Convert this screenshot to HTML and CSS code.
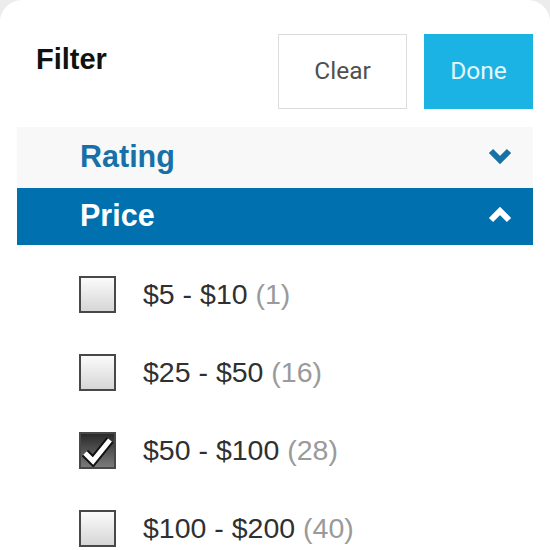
FILE: index.html
```html
<!DOCTYPE html>
<html>
<head>
<meta charset="utf-8">
<link rel="stylesheet" href="styles.css">
</head>
<body>
<div class="panel">
  <header class="header">
    <h1 class="title">Filter</h1>
    <div class="actions">
      <button class="btn btn-clear">Clear</button>
      <button class="btn btn-done">Done</button>
    </div>
  </header>
  <div class="accordion">
    <div class="acc-row acc-closed">
      <span class="acc-label">Rating</span>
      <svg class="chev" width="24" height="16" viewBox="0 0 24 16"><polyline points="3,3 12,12 21,3" fill="none" stroke="currentColor" stroke-width="6" stroke-linejoin="miter" stroke-linecap="butt"/></svg>
    </div>
    <div class="acc-row acc-open">
      <span class="acc-label">Price</span>
      <svg class="chev" width="24" height="16" viewBox="0 0 24 16"><polyline points="3,13 12,4 21,13" fill="none" stroke="currentColor" stroke-width="6" stroke-linejoin="miter" stroke-linecap="butt"/></svg>
    </div>
    <ul class="options">
      <li class="option"><span class="box"></span><span class="opt-text">$5 - $10 <span class="count">(1)</span></span></li>
      <li class="option"><span class="box"></span><span class="opt-text">$25 - $50 <span class="count">(16)</span></span></li>
      <li class="option"><span class="box box-checked"><svg width="33" height="33" viewBox="0 0 33 33"><polyline points="4,19 12,27 29,6" fill="none" stroke="#111" stroke-width="9" stroke-linejoin="miter"/><polyline points="4,19 12,27 29,6" fill="none" stroke="#fff" stroke-width="5" stroke-linejoin="miter"/></svg></span><span class="opt-text">$50 - $100 <span class="count">(28)</span></span></li>
      <li class="option"><span class="box"></span><span class="opt-text">$100 - $200 <span class="count">(40)</span></span></li>
    </ul>
  </div>
</div>
</body>
</html>
```
FILE: styles.css
```css
html, body {
  margin: 0;
  padding: 0;
  background: #ececec;
}
.panel {
  width: 550px;
  height: 550px;
  background: #fff;
  border-radius: 22px 22px 0 0;
  overflow: hidden;
  font-family: "Liberation Sans", Arial, sans-serif;
}
.header {
  display: flex;
  justify-content: space-between;
  align-items: flex-start;
  height: 127px;
  box-sizing: border-box;
  padding: 34px 17px 0 36px;
}
.title {
  margin: 11px 0 0 0;
  font-size: 29px;
  line-height: 29px;
  font-weight: bold;
  color: #111;
}
.actions {
  display: flex;
  gap: 17px;
}
.btn {
  height: 75px;
  font-family: Roboto, "Liberation Sans", sans-serif;
  font-size: 24.5px;
  padding: 0 0 2px 0;
  margin: 0;
  cursor: pointer;
}
.btn-clear {
  width: 129px;
  background: #fff;
  border: 1.5px solid #dcdcdc;
  color: #505050;
}
.btn-done {
  width: 109px;
  background: #1bb3e4;
  border: none;
  color: #e6f7fc;
}
.accordion {
  margin: 0 17px;
}
.acc-row {
  display: flex;
  align-items: center;
  justify-content: space-between;
  padding: 0 21px 0 63px;
  box-sizing: border-box;
}
.acc-closed {
  height: 61px;
  background: #f8f8f8;
  color: #1770a8;
  padding-bottom: 4px;
}
.acc-open {
  height: 57px;
  background: #0070ae;
  color: #fff;
  padding-bottom: 4px;
}
.acc-label {
  font-size: 30.5px;
  line-height: 30px;
  font-weight: bold;
}
.chev {
  display: block;
}
.options {
  list-style: none;
  margin: 0;
  padding: 10px 0 0 62px;
}
.option {
  display: flex;
  align-items: center;
  gap: 27px;
  height: 78px;
}
.box {
  width: 37px;
  height: 37px;
  box-sizing: border-box;
  border: 2px solid #484848;
  background: linear-gradient(#fbfbfb, #d6d6d6);
  display: flex;
  align-items: center;
  justify-content: center;
  flex: none;
}
.box-checked {
  background: linear-gradient(#2a2a2a, #7a7a7a);
}
.box-checked svg {
  display: block;
}
.opt-text {
  font-size: 28.5px;
  color: #303030;
}
.count {
  color: #9a9a9a;
}
```
